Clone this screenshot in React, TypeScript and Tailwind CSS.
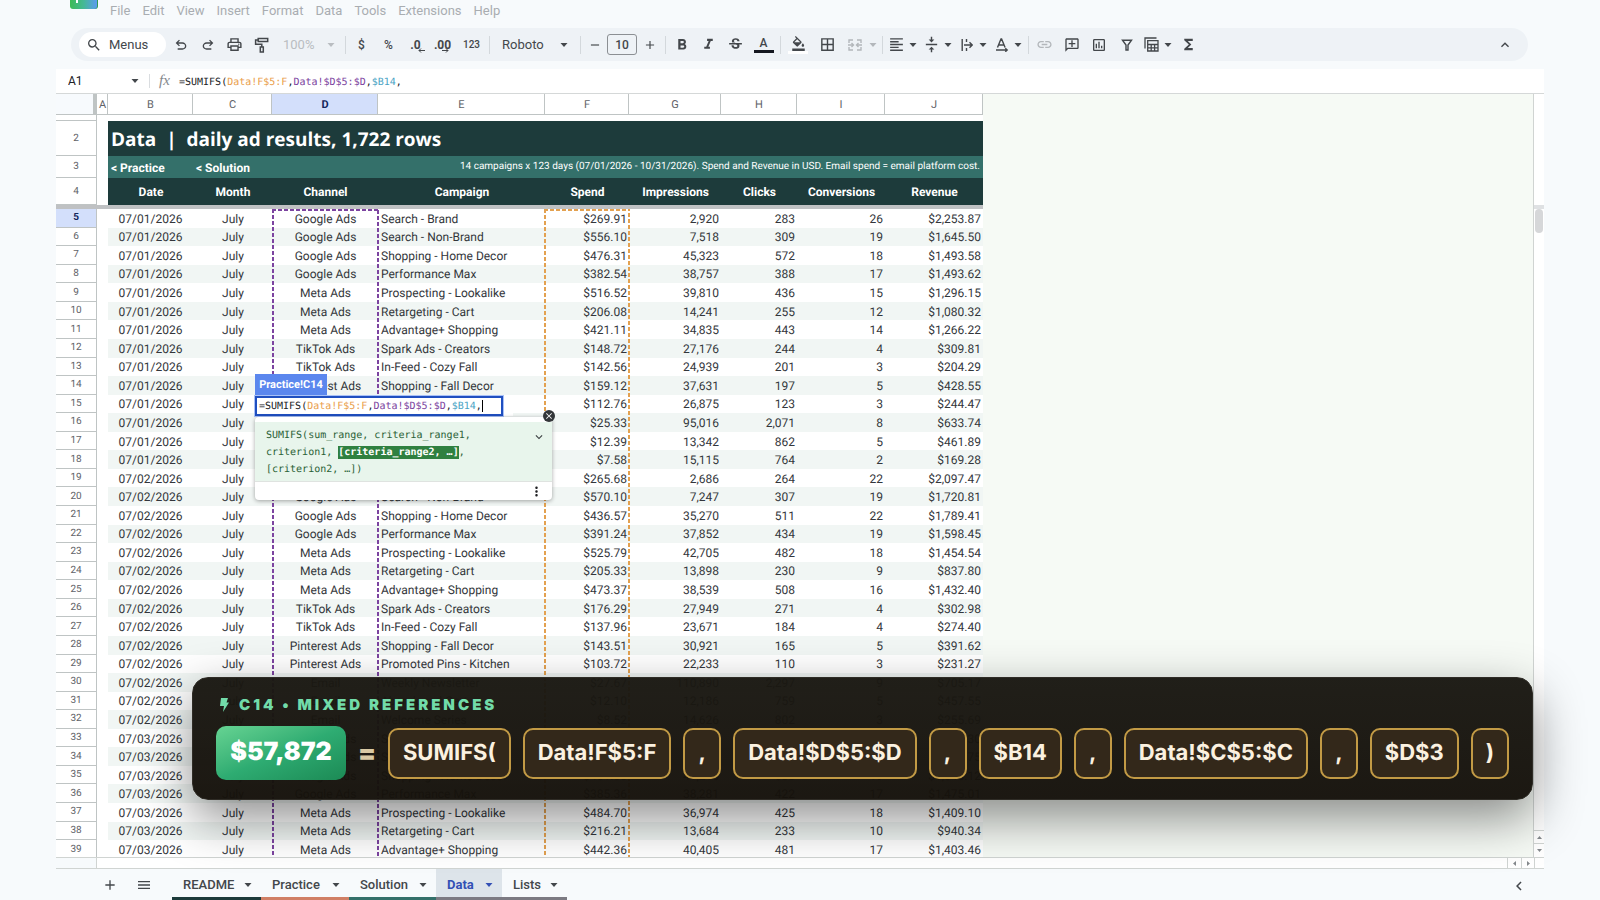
import type { ReactNode } from "react";
import {
  MdAdd,
  MdBorderAll,
  MdClose,
  MdFormatAlignLeft,
  MdFormatBold,
  MdFormatColorFill,
  MdFormatItalic,
  MdFunctions,
  MdKeyboardArrowDown,
  MdKeyboardArrowLeft,
  MdKeyboardArrowUp,
  MdLink,
  MdMenu,
  MdMoreVert,
  MdOutlineAddComment,
  MdOutlineInsertChart,
  MdOutlinePrint,
  MdRemove,
  MdSearch,
  MdStrikethroughS,
  MdVerticalAlignCenter,
} from "react-icons/md";

const menus = ["File", "Edit", "View", "Insert", "Format", "Data", "Tools", "Extensions", "Help"];

const campaigns: [string, string][] = [
  ["Google Ads", "Search - Brand"],
  ["Google Ads", "Search - Non-Brand"],
  ["Google Ads", "Shopping - Home Decor"],
  ["Google Ads", "Performance Max"],
  ["Meta Ads", "Prospecting - Lookalike"],
  ["Meta Ads", "Retargeting - Cart"],
  ["Meta Ads", "Advantage+ Shopping"],
  ["TikTok Ads", "Spark Ads - Creators"],
  ["TikTok Ads", "In-Feed - Cozy Fall"],
  ["Pinterest Ads", "Shopping - Fall Decor"],
  ["Pinterest Ads", "Promoted Pins - Kitchen"],
  ["Email", "Weekly Newsletter"],
  ["Email", "Abandoned Cart"],
  ["Email", "Welcome Series"],
];

// spend, impressions, clicks, conversions, revenue
const metrics = [
  ["$269.91", "2,920", "283", "26", "$2,253.87"],
  ["$556.10", "7,518", "309", "19", "$1,645.50"],
  ["$476.31", "45,323", "572", "18", "$1,493.58"],
  ["$382.54", "38,757", "388", "17", "$1,493.62"],
  ["$516.52", "39,810", "436", "15", "$1,296.15"],
  ["$206.08", "14,241", "255", "12", "$1,080.32"],
  ["$421.11", "34,835", "443", "14", "$1,266.22"],
  ["$148.72", "27,176", "244", "4", "$309.81"],
  ["$142.56", "24,939", "201", "3", "$204.29"],
  ["$159.12", "37,631", "197", "5", "$428.55"],
  ["$112.76", "26,875", "123", "3", "$244.47"],
  ["$25.33", "95,016", "2,071", "8", "$633.74"],
  ["$12.39", "13,342", "862", "5", "$461.89"],
  ["$7.58", "15,115", "764", "2", "$169.28"],
  ["$265.68", "2,686", "264", "22", "$2,097.47"],
  ["$570.10", "7,247", "307", "19", "$1,720.81"],
  ["$436.57", "35,270", "511", "22", "$1,789.41"],
  ["$391.24", "37,852", "434", "19", "$1,598.45"],
  ["$525.79", "42,705", "482", "18", "$1,454.54"],
  ["$205.33", "13,898", "230", "9", "$837.80"],
  ["$473.37", "38,539", "508", "16", "$1,432.40"],
  ["$176.29", "27,949", "271", "4", "$302.98"],
  ["$137.96", "23,671", "184", "4", "$274.40"],
  ["$143.51", "30,921", "165", "5", "$391.62"],
  ["$103.72", "22,233", "110", "3", "$231.27"],
  ["$27.67", "110,890", "2,297", "9", "$705.17"],
  ["$12.10", "12,186", "759", "5", "$457.55"],
  ["$8.52", "14,626", "802", "3", "$255.69"],
  ["$274.16", "2,845", "271", "24", "$2,164.30"],
  ["$548.92", "7,390", "315", "18", "$1,602.75"],
  ["$451.08", "41,216", "538", "19", "$1,540.12"],
  ["$385.36", "38,281", "422", "17", "$1,475.01"],
  ["$484.70", "36,974", "425", "18", "$1,409.10"],
  ["$216.21", "13,684", "233", "10", "$940.34"],
  ["$442.36", "40,405", "481", "17", "$1,403.46"],
];

const rows = metrics.map((values, i) => ({
  number: i + 5,
  date: `07/0${Math.floor(i / 14) + 1}/2026`,
  channel: campaigns[i % 14][0],
  campaign: campaigns[i % 14][1],
  values,
}));

const sheets = [
  { name: "README", bar: "bg-[#1d3b3b]", width: "w-[89px]" },
  { name: "Practice", bar: "bg-[#d07f65]", width: "w-[88px]" },
  { name: "Solution", bar: "bg-[#34706a]", width: "w-[87px]" },
  { name: "Data", bar: "bg-[#7c7a82]", width: "w-[66px]", active: true },
  { name: "Lists", bar: "bg-[#7c7a82]", width: "w-[65px]" },
];

const chips = ["SUMIFS(", "Data!F$5:F", ",", "Data!$D$5:$D", ",", "$B14", ",", "Data!$C$5:$C", ",", "$D$3", ")"];

function Caret({ className = "" }: { className?: string }) {
  return (
    <svg className={`h-1 w-2 shrink-0 ${className}`} viewBox="0 0 8 4" fill="currentColor" aria-hidden="true">
      <path d="M0.5 0h7L4 4z" />
    </svg>
  );
}

function ScrollArrow({ className = "" }: { className?: string }) {
  return (
    <svg className={`size-[5px] shrink-0 text-[#85898d] ${className}`} viewBox="0 0 5 5" fill="currentColor" aria-hidden="true">
      <path d="M0 1h5L2.500 4z" />
    </svg>
  );
}

function Separator() {
  return <span className="mx-[2px] h-[18px] w-px shrink-0 bg-[#d3d8dc]" />;
}

function Tool({ label, width = "w-[27px]", children }: { label: string; width?: string; children: ReactNode }) {
  return (
    <button type="button" aria-label={label} className={`flex h-6 shrink-0 items-center justify-center ${width}`}>
      {children}
    </button>
  );
}

function DropTool({ label, children }: { label: string; children: ReactNode }) {
  return (
    <button type="button" aria-label={label} className="flex h-6 w-[35px] shrink-0 items-center">
      <span className="flex w-[23px] justify-center">{children}</span>
      <Caret className="ml-px" />
    </button>
  );
}

function Symbol({ d }: { d: string }) {
  return (
    <svg className="size-4" viewBox="0 -960 960 960" fill="currentColor" aria-hidden="true">
      <path d={d} />
    </svg>
  );
}

function Toolbar() {
  return (
    <div className="mr-4 ml-[15px] flex h-[33px] shrink-0 items-center rounded-full bg-[#eef2f6] pl-2 text-[#43474b]">
      <button type="button" className="mr-px flex h-[25px] w-[87px] shrink-0 items-center gap-[7px] rounded-full bg-white pl-[7px] text-[13px]">
        <MdSearch className="size-4" />
        Menus
      </button>
      <Tool label="Undo">
        <Symbol d="M280-200v-80h284q63 0 109.5-40T720-420q0-60-46.5-100T564-560H312l104 104-56 56-200-200 200-200 56 56-104 104h252q97 0 166.5 63T800-420q0 94-69.5 157T564-200H280Z" />
      </Tool>
      <Tool label="Redo">
        <Symbol d="M396-200q-97 0-166.5-63T160-420q0-94 69.5-157T396-640h252L544-744l56-56 200 200-200 200-56-56 104-104H396q-63 0-109.5 40T240-420q0 60 46.5 100T396-280h284v80H396Z" />
      </Tool>
      <Tool label="Print">
        <MdOutlinePrint className="size-[17px]" />
      </Tool>
      <Tool label="Paint format">
        <svg className="size-4" viewBox="0 0 16 16" fill="none" stroke="currentColor" strokeWidth="1.5" aria-hidden="true">
          <path d="M4.2 1.5h9.5v3H4.2z M4.2 3H1.6v4.2h6.2v2.6M6.3 10h3v5h-3z" />
        </svg>
      </Tool>
      <button type="button" className="flex w-[68px] shrink-0 items-center justify-between pr-2 pl-2 text-[13px] text-[#b9bdc1]">
        100%
        <Caret />
      </button>
      <Separator />
      <Tool label="Currency">
        <span className="text-[12px] font-medium">$</span>
      </Tool>
      <Tool label="Percent">
        <span className="text-[12px] font-medium">%</span>
      </Tool>
      <Tool label="Decrease decimals">
        <span className="relative text-[12px] leading-4 font-bold">
          .0
          <svg className="absolute top-[11px] left-2 h-[5px] w-[7px]" viewBox="0 0 7 5" fill="none" stroke="currentColor" aria-hidden="true">
            <path d="M7 2.5H1M3 .5l-2 2 2 2" />
          </svg>
        </span>
      </Tool>
      <Tool label="Increase decimals">
        <span className="relative text-[12px] leading-4 font-bold">
          .00
          <svg className="absolute top-[11px] left-2 h-[5px] w-[7px]" viewBox="0 0 7 5" fill="none" stroke="currentColor" aria-hidden="true">
            <path d="M0 2.5h6M4 .5l2 2-2 2" />
          </svg>
        </span>
      </Tool>
      <Tool label="More formats" width="w-[31px]">
        <span className="text-[10px] font-medium">123</span>
      </Tool>
      <Separator />
      <button type="button" className="flex w-[86px] shrink-0 items-center justify-between pr-[10px] pl-[10px] text-[13px]">
        Roboto
        <Caret />
      </button>
      <Separator />
      <Tool label="Smaller" width="w-6">
        <MdRemove className="size-[14px]" />
      </Tool>
      <input aria-label="Font size" defaultValue="10" className="h-[21px] w-[30px] shrink-0 rounded-[3px] border border-[#8b8f93] text-center text-[12px] font-medium" />
      <Tool label="Larger" width="w-[26px]">
        <MdAdd className="size-[14px]" />
      </Tool>
      <Separator />
      <Tool label="Bold">
        <MdFormatBold className="size-[18px]" />
      </Tool>
      <Tool label="Italic">
        <MdFormatItalic className="size-[17px]" />
      </Tool>
      <Tool label="Strikethrough">
        <MdStrikethroughS className="size-[17px]" />
      </Tool>
      <Tool label="Text colour" width="w-[29px]">
        <span className="flex flex-col items-center">
          <span className="text-[12px] leading-[13px] font-medium">A</span>
          <span className="h-[3px] w-5 bg-[#14171f]" />
        </span>
      </Tool>
      <Separator />
      <Tool label="Fill colour" width="w-[30px]">
        <span className="flex flex-col items-center">
          <MdFormatColorFill className="size-[15px]" />
          <span className="h-[3px] w-5 bg-white" />
        </span>
      </Tool>
      <Tool label="Borders" width="w-7">
        <MdBorderAll className="size-[17px]" />
      </Tool>
      <button type="button" aria-label="Merge cells" className="mr-px flex h-6 w-[38px] shrink-0 items-center text-[#b3b7bb]">
        <span className="flex w-7 justify-center">
          <svg className="h-3 w-[14px]" viewBox="0 0 14 12" fill="none" stroke="currentColor" strokeWidth="1.4" aria-hidden="true">
            <path d="M1 4V1h4M9 1h4v3M1 8v3h4M9 11h4V8M0 6h5M3.5 4l2 2-2 2M14 6H9M10.500 4l-2 2 2 2" />
          </svg>
        </span>
        <Caret />
      </button>
      <Separator />
      <DropTool label="Horizontal align">
        <MdFormatAlignLeft className="size-[17px]" />
      </DropTool>
      <DropTool label="Vertical align">
        <MdVerticalAlignCenter className="size-[17px]" />
      </DropTool>
      <DropTool label="Text wrapping">
        <svg className="h-3 w-3" viewBox="0 0 12 12" fill="none" stroke="currentColor" strokeWidth="1.4" aria-hidden="true">
          <path d="M1.200 0v12M5.500 0v3M5.500 9v3M3 6h8M8.500 3.300 11.200 6 8.500 8.700" />
        </svg>
      </DropTool>
      <DropTool label="Text rotation">
        <svg className="size-[14px]" viewBox="0 0 14 14" fill="none" stroke="currentColor" strokeWidth="1.4" aria-hidden="true">
          <path d="M2.500 9.500 6 1h.6l3.500 8.500M3.700 7h5.200M1 12h11M10.300 10.200l1.900 1.800-1.900 1.800" />
        </svg>
      </DropTool>
      <span className="w-px shrink-0" />
      <Separator />
      <Tool label="Insert link">
        <MdLink className="size-[17px] text-[#b3b7bb]" />
      </Tool>
      <Tool label="Insert comment">
        <MdOutlineAddComment className="size-4 -scale-x-100" />
      </Tool>
      <Tool label="Insert chart" width="w-7">
        <MdOutlineInsertChart className="size-4" />
      </Tool>
      <Tool label="Create a filter">
        <svg className="h-3 w-3" viewBox="0 0 12 12" fill="none" stroke="currentColor" strokeWidth="1.4" aria-hidden="true">
          <path d="M1.500 1.200h9L7 6v5H5V6z" />
        </svg>
      </Tool>
      <DropTool label="Table views">
        <svg className="size-[15px]" viewBox="0 0 15 15" fill="none" stroke="currentColor" strokeWidth="1.3" aria-hidden="true">
          <path d="M1 11.500V1h11.500M3.700 3.700H14V14H3.700zM3.700 7.500H14M3.700 10.800H14M7.200 7.500V14M10.600 7.500V14" />
        </svg>
      </DropTool>
      <Tool label="Functions">
        <MdFunctions className="size-[17px]" />
      </Tool>
      <button type="button" aria-label="Hide the menus" className="mr-[15px] ml-auto">
        <MdKeyboardArrowUp className="size-4" />
      </button>
    </div>
  );
}

function Formula() {
  return (
    <>
      <span>=SUMIFS(</span>
      <span className="text-[#eaa04c]">Data!F$5:F</span>
      <span>,</span>
      <span className="text-[#7c44a0]">Data!$D$5:$D</span>
      <span>,</span>
      <span className="text-[#4aa3c4]">$B14</span>
      <span>,</span>
    </>
  );
}

function Columns() {
  return (
    <colgroup>
      <col className="w-[41px]" />
      <col className="w-[11px]" />
      <col className="w-[85px]" />
      <col className="w-[79px]" />
      <col className="w-[106px]" />
      <col className="w-[167px]" />
      <col className="w-[84px]" />
      <col className="w-[92px]" />
      <col className="w-[76px]" />
      <col className="w-[88px]" />
      <col className="w-[98px]" />
    </colgroup>
  );
}

function FrozenRows() {
  const number = "border-r border-b border-[#bfc4c4] bg-white p-0 pt-px text-[10px] font-normal text-[#5f6368]";
  return (
    <table className="w-[927px] table-fixed border-separate border-spacing-0 bg-white text-[12px] leading-4">
      <Columns />
      <thead>
        <tr className="h-[21px] text-[11px] text-[#5f6368]">
          <td className="border-r-4 border-b border-[#bfc4c4] bg-[#f7fafd]" />
          {"ABCDEFGHIJ".split("").map((letter) => (
            <th
              key={letter}
              scope="col"
              className={`border-r border-b border-[#bfc4c4] p-0 pt-px pl-px ${letter === "D" ? "bg-[#d3dffb] font-bold text-[#14275c]" : "font-normal"}`}
            >
              {letter}
            </th>
          ))}
        </tr>
      </thead>
      <tbody>
        <tr className="h-[6px] leading-[0]">
          <td className="border-r border-b border-[#bfc4c4] p-0" />
          <td colSpan={10} className="p-0" />
        </tr>
        <tr className="h-[35px]">
          <th scope="row" className={number}>2</th>
          <td />
          <td colSpan={9} className="bg-[#1d3b3b] p-0 pl-[3px] font-['Open_Sans',sans-serif] text-[19px] font-bold whitespace-pre text-white">
            {"Data  |  daily ad results, 1,722 rows"}
          </td>
        </tr>
        <tr className="h-[22px] text-white">
          <th scope="row" className={number}>3</th>
          <td />
          <td className="bg-[#34706a] p-0 pt-px pl-[3px] font-bold">
            <a href="#practice">&lt; Practice</a>
          </td>
          <td className="bg-[#34706a] p-0 pt-px pl-[3px] font-bold">
            <a href="#solution">&lt; Solution</a>
          </td>
          <td colSpan={7} className="bg-[#34706a] p-0 pr-[3px] text-right text-[10px]">
            14 campaigns x 123 days (07/01/2026 - 10/31/2026). Spend and Revenue in USD. Email spend = email platform cost.
          </td>
        </tr>
        <tr className="h-[27px] text-white">
          <th scope="row" className={number}>4</th>
          <td />
          {["Date", "Month", "Channel", "Campaign", "Spend", "Impressions", "Clicks", "Conversions", "Revenue"].map((title) => (
            <th key={title} scope="col" className="bg-[#1d3b3b] p-0 pt-px pl-px font-bold">
              {title}
            </th>
          ))}
        </tr>
        <tr className="h-1 leading-[0]">
          <td colSpan={11} className="bg-[#bfc1c3] p-0" />
        </tr>
      </tbody>
    </table>
  );
}

function DataRows() {
  return (
    <table className="h-[650px] w-[927px] table-fixed border-separate border-spacing-0 bg-white text-[12px] leading-4 text-[#33363b]">
      <Columns />
      <tbody>
        {rows.map((row) => {
          const shade = row.number % 2 === 0 ? "bg-[#f1f6f4]" : "";
          return (
            <tr key={row.number}>
              <th
                scope="row"
                className={`border-r border-b border-[#bfc4c4] p-0 pt-px text-[10px] ${row.number === 5 ? "bg-[#d3dffb] font-bold text-[#14275c]" : "font-normal text-[#5f6368]"}`}
              >
                {row.number}
              </th>
              <td className="p-0" />
              <td className={`p-0 pt-px text-center ${shade}`}>{row.date}</td>
              <td className={`p-0 pt-px pl-px text-center ${shade}`}>July</td>
              <td className={`p-0 pt-px pl-px text-center ${shade}`}>{row.channel}</td>
              <td className={`p-0 pt-px pl-[3px] ${shade}`}>{row.campaign}</td>
              {row.values.map((value, i) => (
                <td key={i} className={`p-0 pt-px pr-[2px] text-right ${shade}`}>
                  {value}
                </td>
              ))}
            </tr>
          );
        })}
      </tbody>
    </table>
  );
}

function RangeOutline({ className }: { className: string }) {
  return (
    <svg className={`absolute top-0 h-[660px] ${className}`} fill="none" stroke="currentColor" strokeWidth="4" strokeDasharray="4 2" aria-hidden="true">
      <rect width="100%" height="100%" />
    </svg>
  );
}

function CellEditor() {
  return (
    <div className="absolute top-[165px] left-[199px] w-[297px] font-['DejaVu_Sans_Mono',monospace] text-[10px]">
      <div className="flex h-[22px] w-[72px] items-center justify-center bg-[#5b87ee] font-['Roboto',sans-serif] text-[11px] font-bold text-white">
        Practice!C14
      </div>
      <div className="w-[258px] bg-white">
        <div className="flex h-5 w-[248px] items-center border-2 border-[#1f4fc0] bg-white pl-[2px] whitespace-pre text-[#202124] ring-1 ring-[#a9c1f7]">
          <Formula />
          <span className="h-3 w-px bg-black" />
        </div>
      </div>
      <div className="mt-px rounded-sm bg-white pt-[5px] shadow-[0_1px_4px_rgba(0,0,0,0.35)]">
        <div className="flex justify-between bg-[#e8f5ec] pt-[5px] pr-[6px] pb-[3px] pl-[11px]">
          <p className="leading-[17px] text-[#2a6136]">
            SUMIFS(sum_range, criteria_range1,
            <br />
            criterion1, <b className="bg-[#2f8040] py-px text-white">[criteria_range2, …]</b>,
            <br />
            [criterion2, …])
          </p>
          <button type="button" aria-label="Collapse help" className="mt-[3px] size-[14px] text-[#3c4043]">
            <MdKeyboardArrowDown className="size-[14px]" />
          </button>
        </div>
        <div className="flex h-[19px] items-center justify-end border-t border-[#dfe3e0] pr-2">
          <button type="button" aria-label="More options">
            <MdMoreVert className="size-[15px] text-[#202124]" />
          </button>
        </div>
      </div>
      <button
        type="button"
        aria-label="Close help"
        className="absolute top-9 -right-[3px] flex size-3 items-center justify-center rounded-full bg-[#333639] text-white"
      >
        <MdClose className="size-[10px]" />
      </button>
    </div>
  );
}

function Callout() {
  return (
    <section className="absolute right-[67px] bottom-[100px] left-48 rounded-[16px] border border-[#2f2c26] bg-linear-to-b from-[#1a1812]/97 to-[#15110b]/97 px-[23px] pt-[18px] pb-[19px] font-['Inter',sans-serif] shadow-[0_18px_50px_rgba(0,0,0,0.45)]">
      <h2 className="flex items-center gap-[10px] pl-1 text-[15px] leading-[18px] font-black tracking-[3px] text-[#72dba9]">
        <svg className="h-[14px] w-[9px]" viewBox="0 0 9 14" fill="currentColor" aria-hidden="true">
          <path d="M1 0h7L6.500 4.500H9L3 14l1-6H0z" />
        </svg>
        C14 • MIXED REFERENCES
      </h2>
      <div className="mt-3 flex items-center gap-3">
        <strong className="flex h-[54px] w-[130px] shrink-0 items-center justify-center rounded-[10px] bg-linear-to-br from-[#66d493] via-[#2eac72] to-[#1c8a55] text-[25px] font-black text-white">
          $57,872
        </strong>
        <span className="w-[18px] text-center text-[26px] font-black text-[#d9c9a4]">=</span>
        {chips.map((chip, i) => (
          <span
            key={i}
            className="flex h-[51px] min-w-[38px] items-center justify-center rounded-[10px] border-2 border-[#c29a45] bg-[#33281a] px-[13px] text-[22px] font-bold text-[#fbf1e0]"
          >
            {chip}
          </span>
        ))}
      </div>
    </section>
  );
}

export default function App() {
  return (
    <div className="relative flex h-screen flex-col overflow-hidden bg-[#f7fafc] px-14 font-['Roboto',sans-serif] text-[#202124] [text-rendering:geometricPrecision]">
      <header className="flex h-7 shrink-0 items-start pl-[14px]">
        <svg className="-mt-5 h-[29px] w-7" viewBox="0 0 28 29" aria-hidden="true">
          <defs>
            <linearGradient id="logo" x1="0" x2="1">
              <stop offset="0" stopColor="#3dbb55" />
              <stop offset="0.5" stopColor="#45b995" />
              <stop offset="1" stopColor="#5c9bf0" />
            </linearGradient>
          </defs>
          <path d="M18 0h7q3 0 3 3v23q0 3-3 3h-7z" fill="#2e9a54" />
          <rect width="27" height="29" rx="3" fill="url(#logo)" />
          <path d="M6 8h2v15H6zM6 18h8v2H6z" fill="#fff" />
        </svg>
        <nav className="flex gap-3 pt-px pl-3 text-[13px] leading-5 text-[#a9adb1]">
          {menus.map((menu) => (
            <button type="button" key={menu}>
              {menu}
            </button>
          ))}
        </nav>
      </header>
      <Toolbar />
      <div className="mt-2 flex h-[25px] shrink-0 items-center border-b border-[#d5d8d8] bg-white">
        <input aria-label="Name box" defaultValue="A1" className="w-[62px] pl-3 text-[12px]" />
        <Caret className="ml-[13px] text-[#43474b]" />
        <span className="ml-[10px] h-[14px] w-px bg-[#dadde0]" />
        <span className="ml-[9px] w-5 font-['Liberation_Serif',serif] text-[15px] text-[#85898d] italic">fx</span>
        <div role="textbox" aria-label="Formula" className="pt-[2px] font-['DejaVu_Sans_Mono',monospace] text-[10px] whitespace-pre">
          <Formula />
        </div>
      </div>
      <main className="flex min-h-0 flex-1">
        <div className="min-w-0 flex-1 overflow-hidden border-r border-[#d0d4d2] bg-[#f6faf5]">
          <FrozenRows />
          <div className="relative">
            <DataRows />
            <RangeOutline className="left-[216px] w-[107px] text-[#7c44a0]" />
            <RangeOutline className="left-[488px] w-[86px] text-[#e3a150]" />
            <CellEditor />
          </div>
        </div>
        <div className="flex w-[10px] shrink-0 flex-col items-center bg-white">
          <span className="mt-[111px] h-1 w-full bg-[#dfe1e3]" />
          <span className="h-6 w-2 rounded-full bg-[#d6d7d9]" />
          <button type="button" aria-label="Scroll up" className="mt-auto flex h-[13px] w-full items-center justify-center border-t border-[#d0d4d2]">
            <ScrollArrow className="rotate-180" />
          </button>
          <button type="button" aria-label="Scroll down" className="flex h-[14px] w-full items-center justify-center border-t border-[#d0d4d2]">
            <ScrollArrow />
          </button>
        </div>
      </main>
      <div className="flex h-3 shrink-0 border-y border-[#d0d4d2] bg-white">
        <span className="w-[41px] border-r border-[#d0d4d2] bg-[#f7fafc]" />
        <button type="button" aria-label="Scroll left" className="ml-auto flex w-[14px] items-center justify-center border-l border-[#d0d4d2]">
          <ScrollArrow className="rotate-90" />
        </button>
        <button type="button" aria-label="Scroll right" className="flex w-[14px] items-center justify-center border-x border-[#d0d4d2]">
          <ScrollArrow className="-rotate-90" />
        </button>
        <span className="w-[9px]" />
      </div>
      <footer className="flex h-[31px] shrink-0 items-stretch text-[13px] font-medium text-[#43474b]">
        <button type="button" aria-label="Add sheet" className="ml-[46px]">
          <MdAdd className="size-4" />
        </button>
        <button type="button" aria-label="All sheets" className="mr-5 ml-[18px]">
          <MdMenu className="size-4" />
        </button>
        {sheets.map((sheet) => (
          <button
            type="button"
            key={sheet.name}
            className={`flex flex-col ${sheet.width} ${sheet.active ? "bg-[#dde4ea] font-bold text-[#3350b5]" : ""}`}
          >
            <span className="flex w-full flex-1 items-center justify-between pt-[3px] pr-[9px] pl-[11px]">
              {sheet.name}
              <Caret />
            </span>
            <span className={`h-[3px] w-full ${sheet.bar}`} />
          </button>
        ))}
        <button type="button" aria-label="Show side panel" className="mr-4 ml-auto pt-[3px]">
          <MdKeyboardArrowLeft className="size-[18px]" />
        </button>
      </footer>
      <Callout />
    </div>
  );
}
